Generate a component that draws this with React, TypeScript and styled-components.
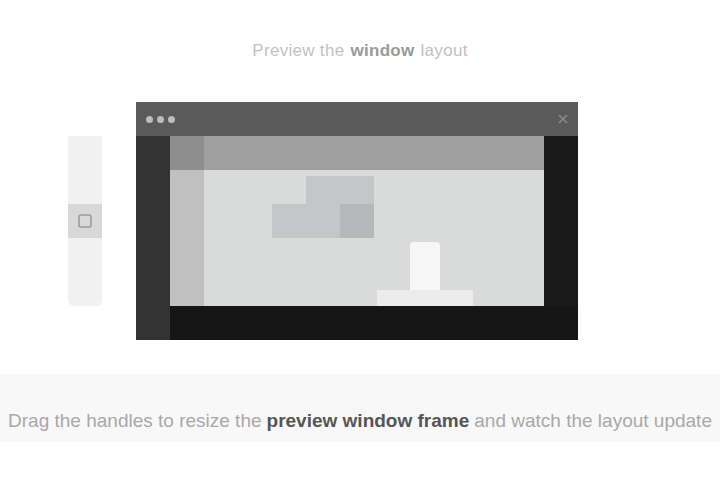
import React from 'react';
import styled, { createGlobalStyle } from 'styled-components';

const GlobalStyle = createGlobalStyle`
  html, body {
    margin: 0;
    padding: 0;
    background: #ffffff;
    font-family: "Liberation Sans", Arial, sans-serif;
  }
`;

const Page = styled.div`
  width: 720px;
  height: 480px;
  overflow: hidden;
  display: flex;
  flex-direction: column;
  padding-top: 34px;
  box-sizing: border-box;
`;

const Title = styled.h1`
  margin: 0;
  height: 34px;
  display: flex;
  align-items: center;
  justify-content: center;
  font-size: 17px;
  font-weight: 400;
  color: #c2c2c2;
  letter-spacing: 0.3px;

  strong {
    color: #9a9a9a;
    font-weight: 700;
    margin: 0 6px;
  }
`;

const Stage = styled.div`
  margin-top: 34px;
  display: flex;
  padding-left: 68px;
  gap: 34px;
`;

const SideTools = styled.div`
  margin-top: 34px;
  width: 34px;
  height: 170px;
  background: #f1f1f1;
  border-radius: 0 0 6px 6px;
  display: flex;
  flex-direction: column;
  align-items: center;
  padding-top: 68px;
  box-sizing: border-box;
`;

const ToolButton = styled.div<{ $active?: boolean }>`
  width: 34px;
  height: 34px;
  background: ${(p) => (p.$active ? '#d8d8d8' : 'transparent')};
  display: flex;
  align-items: center;
  justify-content: center;
  color: #9a9a9a;
`;

const Window = styled.div`
  width: 442px;
  height: 238px;
  display: flex;
  flex-direction: column;
  background: #161616;
`;

const TitleBar = styled.div`
  height: 34px;
  background: #5a5a5a;
  display: flex;
  align-items: center;
  justify-content: space-between;
  padding: 0 10px;
  box-sizing: border-box;
`;

const Dots = styled.div`
  display: flex;
  gap: 4px;
`;

const Dot = styled.span`
  width: 7px;
  height: 7px;
  border-radius: 50%;
  background: #bdbdbd;
`;

const Body = styled.div`
  flex: 1;
  display: grid;
  grid-template-columns: 34px 374px 34px;
  grid-template-rows: 170px 34px;
`;

const Bezel = styled.div<{ $tone: string }>`
  background: ${(p) => p.$tone};
`;

const LeftBezel = styled(Bezel)`
  grid-row: 1 / span 2;
`;

const BottomBezel = styled(Bezel)`
  grid-column: 2 / span 2;
`;

const Screen = styled.div`
  display: flex;
  flex-direction: column;
  background: #d9dbdb;
`;

const ScreenBar = styled.div`
  height: 34px;
  background: #a0a0a0;
  display: flex;
`;

const BarIcon = styled.div`
  width: 34px;
  height: 34px;
  background: #8e8e8e;
`;

const ScreenMain = styled.div`
  flex: 1;
  display: flex;
`;

const ScreenSide = styled.div`
  width: 34px;
  background: #c0c0c0;
`;

const Canvas = styled.div`
  flex: 1;
  display: grid;
  grid-template-columns: 68px 102px 102px 68px;
  grid-template-rows: 68px 68px;
`;

const Shape = styled.div`
  grid-column: 2;
  grid-row: 1;
  display: flex;
  align-items: flex-end;
`;

const Marker = styled.div`
  grid-column: 3;
  grid-row: 2;
  display: flex;
  flex-direction: column;
  align-items: center;
  justify-content: flex-end;
`;

const MarkerStem = styled.div`
  width: 30px;
  height: 48px;
  background: #f6f6f6;
  border-radius: 4px 4px 0 0;
`;

const MarkerBase = styled.div`
  width: 96px;
  height: 16px;
  background: #ececec;
`;

const Footer = styled.div`
  margin-top: 34px;
  height: 68px;
  background: #f8f8f8;
  display: flex;
  align-items: flex-end;
  justify-content: center;
  padding-bottom: 10px;
  box-sizing: border-box;
  white-space: nowrap;
  font-size: 19px;
  color: #a8a8a8;

  b {
    color: #555555;
    margin: 0 5px;
  }
`;

export default function App() {
  return (
    <>
      <GlobalStyle />
      <Page>
        <Title>
          Preview the <strong>window</strong> layout
        </Title>
        <Stage>
          <SideTools>
            <ToolButton $active>
              <svg width="14" height="14" viewBox="0 0 14 14">
                <rect x="1" y="1" width="12" height="12" rx="2" fill="none" stroke="#999" strokeWidth="1.5" />
              </svg>
            </ToolButton>
          </SideTools>
          <Window>
            <TitleBar>
              <Dots>
                <Dot />
                <Dot />
                <Dot />
              </Dots>
              <svg width="10" height="10" viewBox="0 0 10 10">
                <path d="M1 1 L9 9 M9 1 L1 9" stroke="#8a8a8a" strokeWidth="1.6" />
              </svg>
            </TitleBar>
            <Body>
              <LeftBezel $tone="#333333" />
              <Screen>
                <ScreenBar>
                  <BarIcon />
                </ScreenBar>
                <ScreenMain>
                  <ScreenSide />
                  <Canvas>
                    <Shape>
                      <svg width="102" height="68" viewBox="0 0 102 68">
                        <path d="M34 6 H102 V68 H0 V34 H34 Z" fill="#c4c7c7" />
                        <path d="M68 34 H102 V68 H68 Z" fill="#b6b9b9" />
                      </svg>
                    </Shape>
                    <Marker>
                      <MarkerStem />
                      <MarkerBase />
                    </Marker>
                  </Canvas>
                </ScreenMain>
              </Screen>
              <Bezel $tone="#1a1a1a" />
              <BottomBezel $tone="#151515" />
            </Body>
          </Window>
        </Stage>
        <Footer>
          Drag the handles to resize the <b>preview window frame</b> and watch the layout update
        </Footer>
      </Page>
    </>
  );
}
